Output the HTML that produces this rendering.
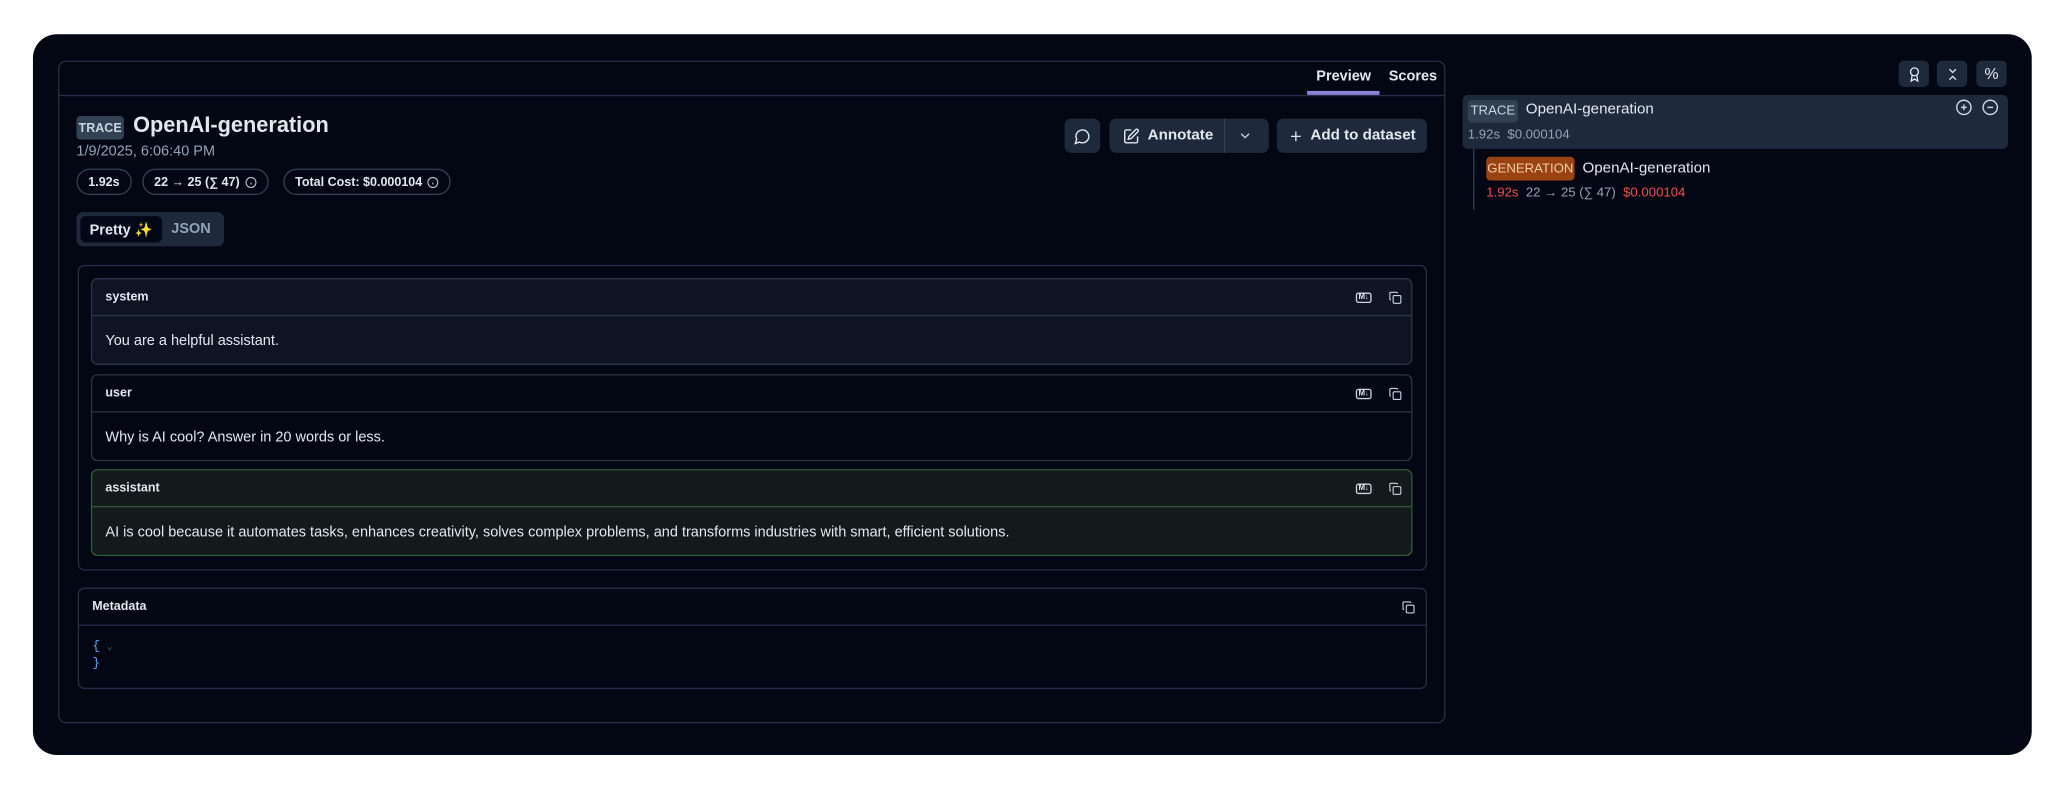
<!DOCTYPE html>
<html><head><meta charset="utf-8">
<style>
*{box-sizing:border-box;margin:0;padding:0}
html,body{width:2066px;height:788px;overflow:hidden;background:#fff}
#w{position:absolute;left:0;top:0;width:1568px;height:598px;transform:scale(1.3176);transform-origin:0 0;font-family:"Liberation Sans",sans-serif;color:#e2e8f0}
.a{position:absolute}
svg{display:block}
.card{left:25px;top:26px;width:1517px;height:547px;background:#020713;border-radius:18px}
.panel{left:44px;top:46px;width:1053px;height:503px;border:1px solid #243047;border-radius:6px}
.badge{background:#334155;color:#cbd5e1;font-size:9.5px;font-weight:bold;border-radius:3px;display:flex;align-items:center;justify-content:center}
.pill{border:1px solid #334155;border-radius:12px;height:20px;font-size:9.5px;font-weight:bold;display:flex;align-items:center;padding:0 8px;gap:4px;color:#e2e8f0}
.btn{background:#1e293b;border-radius:5px;height:26px;display:flex;align-items:center;justify-content:center;font-size:11.5px;font-weight:bold;color:#e2e8f0;gap:6px}
.box{border:1px solid #2a3548;border-radius:5px;background:#0e1424}
.hd{height:28px;border-bottom:1px solid #2a3548;font-size:9.5px;font-weight:bold;padding:0 10px;display:flex;align-items:center;color:#e2e8f0;position:relative}
.ct{font-size:11px;padding:0 10px;height:37px;display:flex;align-items:center;color:#e2e8f0}
.ic{position:absolute;top:9px}
.md{position:absolute;top:10px;width:12px;height:8px;border:1px solid #cbd5e1;border-radius:2px;font-size:6px;line-height:6px;text-align:center;font-weight:bold}
.ib{background:#1e293b;border-radius:4px;width:23px;height:20px;display:flex;align-items:center;justify-content:center}
</style></head><body><div id="w">
<div class="a card"></div>
<div class="a panel"></div>
<div class="a" style="left:44px;top:72px;width:1053px;height:1px;background:#243047"></div>
<div class="a" style="left:999px;top:52px;font-size:11px;font-weight:bold;color:#e2e8f0">Preview</div>
<div class="a" style="left:1054px;top:52px;font-size:11px;font-weight:bold;color:#e2e8f0">Scores</div>
<div class="a" style="left:992px;top:69px;width:55px;height:3px;background:#8b7fd6"></div>

<div class="a badge" style="left:58px;top:88px;width:36px;height:18px">TRACE</div>
<div class="a" style="left:101px;top:86px;font-size:16.5px;font-weight:bold;color:#e2e8f0">OpenAI-generation</div>
<div class="a" style="left:58px;top:109px;font-size:11px;color:#94a3b8">1/9/2025, 6:06:40 PM</div>
<div class="a pill" style="left:58px;top:128px">1.92s</div>
<div class="a pill" style="left:108px;top:128px">22 → 25 (∑ 47) <svg width="9" height="9" viewBox="0 0 24 24" fill="none" stroke="#cbd5e1" stroke-width="2"><circle cx="12" cy="12" r="10"/><path d="M12 16v-4M12 8h0"/></svg></div>
<div class="a pill" style="left:215px;top:128px">Total Cost: $0.000104 <svg width="9" height="9" viewBox="0 0 24 24" fill="none" stroke="#cbd5e1" stroke-width="2"><circle cx="12" cy="12" r="10"/><path d="M12 16v-4M12 8h0"/></svg></div>
<div class="a" style="left:58px;top:161px;width:112px;height:26px;background:#1e293b;border-radius:5px"></div>
<div class="a" style="left:61px;top:164px;width:62px;height:20px;background:#020817;border-radius:4px;font-size:11px;font-weight:bold;display:flex;align-items:center;justify-content:center">Pretty ✨</div>
<div class="a" style="left:130px;top:168px;font-size:11px;font-weight:bold;color:#94a3b8">JSON</div>

<div class="a btn" style="left:808px;top:90px;width:27px"><svg width="13" height="13" viewBox="0 0 24 24" fill="none" stroke="#e2e8f0" stroke-width="2"><path d="M7.9 20A9 9 0 1 0 4 16.1L2 22Z"/></svg></div>
<div class="a btn" style="left:842px;top:90px;width:121px;justify-content:flex-start;padding-left:10px"><svg width="13" height="13" viewBox="0 0 24 24" fill="none" stroke="#e2e8f0" stroke-width="2"><path d="M12 3H5a2 2 0 0 0-2 2v14a2 2 0 0 0 2 2h14a2 2 0 0 0 2-2v-7"/><path d="M18.4 2.6a2.1 2.1 0 0 1 3 3L12 15l-4 1 1-4Z"/></svg>Annotate</div>
<div class="a" style="left:929px;top:90px;width:1px;height:26px;background:#334155"></div>
<svg class="a" style="left:941px;top:100px" width="8" height="6" viewBox="0 0 8 6" fill="none" stroke="#cbd5e1" stroke-width="1"><path d="M1 1.5l3 3 3-3"/></svg>
<div class="a btn" style="left:969px;top:90px;width:114px"><svg width="11" height="11" viewBox="0 0 24 24" fill="none" stroke="#e2e8f0" stroke-width="2.2"><path d="M12 4v16M4 12h16"/></svg>Add to dataset</div>

<div class="a" style="left:59px;top:201px;width:1024px;height:232px;border:1px solid #243047;border-radius:5px"></div>
<div class="a box" style="left:69px;top:211px;width:1003px;height:66px"><div class="hd">system<span class="md" style="left:959px">M↓</span><svg class="ic" style="left:984px" width="10" height="10" viewBox="0 0 24 24" fill="none" stroke="#cbd5e1" stroke-width="2"><rect x="8" y="8" width="14" height="14" rx="2"/><path d="M4 16a2 2 0 0 1-2-2V4a2 2 0 0 1 2-2h10a2 2 0 0 1 2 2"/></svg></div><div class="ct">You are a helpful assistant.</div></div>
<div class="a box" style="left:69px;top:284px;width:1003px;height:66px;background:#020713"><div class="hd">user<span class="md" style="left:959px">M↓</span><svg class="ic" style="left:984px" width="10" height="10" viewBox="0 0 24 24" fill="none" stroke="#cbd5e1" stroke-width="2"><rect x="8" y="8" width="14" height="14" rx="2"/><path d="M4 16a2 2 0 0 1-2-2V4a2 2 0 0 1 2-2h10a2 2 0 0 1 2 2"/></svg></div><div class="ct">Why is AI cool? Answer in 20 words or less.</div></div>
<div class="a box" style="left:69px;top:356px;width:1003px;height:66px;background:#121a1b;border-color:#35583a"><div class="hd" style="border-color:#35583a">assistant<span class="md" style="left:959px">M↓</span><svg class="ic" style="left:984px" width="10" height="10" viewBox="0 0 24 24" fill="none" stroke="#cbd5e1" stroke-width="2"><rect x="8" y="8" width="14" height="14" rx="2"/><path d="M4 16a2 2 0 0 1-2-2V4a2 2 0 0 1 2-2h10a2 2 0 0 1 2 2"/></svg></div><div class="ct">AI is cool because it automates tasks, enhances creativity, solves complex problems, and transforms industries with smart, efficient solutions.</div></div>

<div class="a" style="left:59px;top:446px;width:1024px;height:77px;border:1px solid #243047;border-radius:5px"><div class="hd" style="border-color:#243047">Metadata<svg class="ic" style="left:1004px" width="10" height="10" viewBox="0 0 24 24" fill="none" stroke="#cbd5e1" stroke-width="2"><rect x="8" y="8" width="14" height="14" rx="2"/><path d="M4 16a2 2 0 0 1-2-2V4a2 2 0 0 1 2-2h10a2 2 0 0 1 2 2"/></svg></div>
<div style="font-family:'Liberation Mono',monospace;font-size:10px;color:#60a5fa;padding:10px 10px;line-height:13px">{<span style="color:#475569;font-size:8px"> ⌄</span><br>}</div></div>

<div class="a ib" style="left:1441px;top:46px"><svg width="12" height="13" viewBox="0 0 24 24" fill="none" stroke="#e2e8f0" stroke-width="2"><circle cx="12" cy="8" r="6"/><path d="M8.5 13 7 22l5-3 5 3-1.5-9"/></svg></div>
<div class="a ib" style="left:1470px;top:46px"><svg width="12" height="13" viewBox="0 0 24 24" fill="none" stroke="#e2e8f0" stroke-width="2"><path d="m7 20 5-5 5 5M7 4l5 5 5-5"/></svg></div>
<div class="a ib" style="left:1500px;top:46px;font-size:12px">%</div>
<div class="a" style="left:1110px;top:72px;width:414px;height:41px;background:#1e293b;border-radius:4px"></div>
<div class="a badge" style="left:1114px;top:76px;width:38px;height:17px;background:#334155;font-weight:normal;font-size:10px">TRACE</div>
<div class="a" style="left:1158px;top:77px;font-size:11.5px;color:#e2e8f0">OpenAI-generation</div>
<div class="a" style="left:1114px;top:97px;font-size:10px;color:#94a3b8">1.92s&nbsp;&nbsp;$0.000104</div>
<svg class="a" style="left:1484px;top:75px" width="13" height="13" viewBox="0 0 24 24" fill="none" stroke="#cbd5e1" stroke-width="2"><circle cx="12" cy="12" r="10"/><path d="M8 12h8M12 8v8"/></svg>
<svg class="a" style="left:1504px;top:75px" width="13" height="13" viewBox="0 0 24 24" fill="none" stroke="#cbd5e1" stroke-width="2"><circle cx="12" cy="12" r="10"/><path d="M8 12h8"/></svg>
<div class="a" style="left:1118px;top:113px;width:1px;height:46px;background:#334155"></div>
<div class="a badge" style="left:1128px;top:119px;width:67px;height:18px;background:#9a4312;color:#f5cba7;font-weight:normal;font-size:10px">GENERATION</div>
<div class="a" style="left:1201px;top:122px;font-size:11.5px;color:#e2e8f0">OpenAI-generation</div>
<div class="a" style="left:1128px;top:141px;font-size:10px;color:#94a3b8"><span style="color:#ef5350">1.92s</span>&nbsp;&nbsp;22 → 25 (∑ 47)&nbsp;&nbsp;<span style="color:#ef5350">$0.000104</span></div>
</div></body></html>
